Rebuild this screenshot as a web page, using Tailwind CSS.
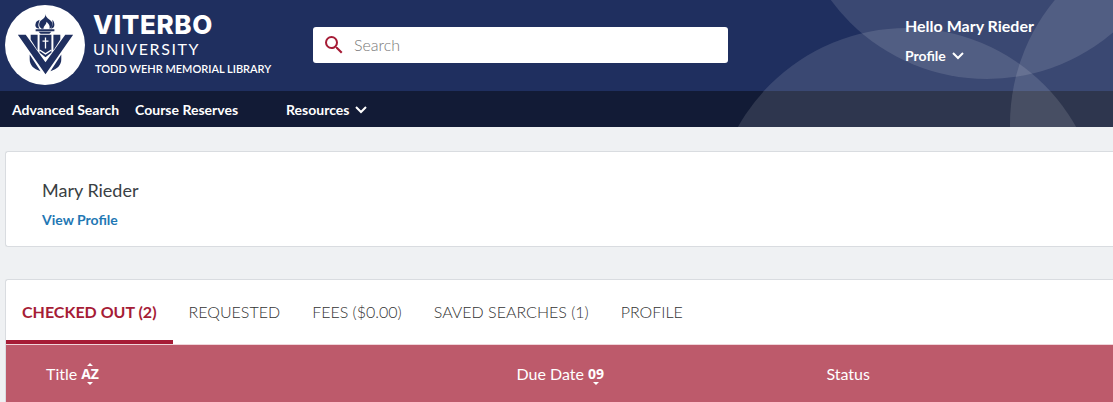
<!DOCTYPE html>
<html lang="en">
<head>
    <meta charset="UTF-8">
    <meta name="viewport" content="width=device-width, initial-scale=1.0">
    <title>My Account - Todd Wehr Memorial Library</title>
    <script src="https://cdn.jsdelivr.net/npm/@tailwindcss/browser@4"></script>
</head>
<body class="bg-[#eff1f3] min-h-screen overflow-x-hidden font-[Lato,sans-serif]">
    <header class="relative overflow-hidden bg-[#1f2f5f] text-white">
        <!-- Nav strip shade sits under the circles -->
        <div class="absolute inset-x-0 bottom-0 h-9 bg-[#121b36]"></div>
        <svg class="absolute right-0 top-0" width="375" height="127" viewBox="738 0 375 127" fill="#fff" fill-opacity=".12" aria-hidden="true">
            <circle cx="987" cy="-115" r="194"/>
            <circle cx="907" cy="222" r="194"/>
            <circle cx="1204" cy="124" r="194"/>
        </svg>

        <div class="relative flex h-[91px] items-center pb-px">
            <a href="#" class="flex w-[313px] shrink-0 items-center gap-2 pl-[5px]">
                <svg class="shrink-0" width="80" height="80" viewBox="0 0 81 81" aria-hidden="true">
                    <circle cx="40.5" cy="40.5" r="40.5" fill="#fff"/>
                    <g fill="#1f2f5f">
                        <!-- flame -->
                        <path d="M41 9c0 5 7 6 7 10 0 3-1 4-3 5 1-3-1-5-3-7 0 3-3 4-3 7h-2c-3-2-3-5-1-8 2-2 5-3 5-7z"/>
                        <path d="M35 15c-1 4-2 6 0 9-3 0-5-2-4-5 0-2 2-3 4-4zM48 15c1 1 2 3 2 5 0 2-1 4-4 4 3-3 2-6 2-9z"/>
                        <path d="M31 24.500h19v2H31zM34 27h13l-2 2h-9z"/>
                        <!-- shield and slabs -->
                        <path d="M35 30h12v18l-6 5-6-5z"/>
                        <path d="M26 30h7v16l-7-11zM49 30h7v5l-7 11z"/>
                        <!-- V -->
                        <path d="M13 30h8l20 28 20-28h8L41 70z"/>
                        <path d="M25 50l11 17c-7-2-11-6-11-12zM57 50L46 67c7-2 11-6 11-12z"/>
                    </g>
                    <path d="M41 33v11M38 36.500h6M35 45.500l6 4 6-4" fill="none" stroke="#fff" stroke-width="1.300"/>
                </svg>
                <span class="flex flex-col">
                    <span class="font-[Inter,sans-serif] text-[26px] leading-7 font-extrabold tracking-wide">VITERBO</span>
                    <span class="text-[16px] leading-5 tracking-widest">UNIVERSITY</span>
                    <span class="pl-0.5 text-[11px] leading-5 font-semibold">TODD WEHR MEMORIAL LIBRARY</span>
                </span>
            </a>
            <label class="flex h-9 w-[415px] items-center gap-2 rounded-[3px] bg-white pl-[9px]">
                <svg class="shrink-0" width="24" height="24" viewBox="0 0 24 24" fill="#a61c36" aria-hidden="true">
                    <path d="M15.500 14h-.79l-.28-.27A6.471 6.471 0 0 0 16 9.500 6.500 6.500 0 1 0 9.500 16c1.610 0 3.090-.59 4.230-1.570l.27.28v.79l5 4.990L20.490 19l-4.990-5zm-6 0C7.010 14 5 11.990 5 9.500S7.010 5 9.500 5 14 7.010 14 9.500 11.990 14 9.500 14z"/>
                </svg>
                <input type="search" placeholder="Search" aria-label="Search" class="w-full bg-transparent text-[16px] font-light text-gray-700 outline-none placeholder:text-[#777]">
            </label>
            <div class="ml-auto flex w-[208px] shrink-0 flex-col items-start gap-1.5 pb-2 font-bold">
                <span class="text-[16px] leading-6">Hello Mary Rieder</span>
                <button type="button" class="flex items-center gap-1.5 text-[14px] leading-6">
                    Profile
                    <svg width="12" height="8" viewBox="0 0 12 8" fill="none" stroke="#fff" stroke-width="2" aria-hidden="true"><path d="M1 1l5 5 5-5"/></svg>
                </button>
            </div>
        </div>

        <nav class="relative flex h-9 items-center pt-px pl-3 text-[14px] font-bold">
            <a href="#" class="mr-4">Advanced Search</a>
            <a href="#" class="mr-12">Course Reserves</a>
            <button type="button" class="flex items-center gap-1.5">
                Resources
                <svg width="12" height="8" viewBox="0 0 12 8" fill="none" stroke="#fff" stroke-width="2" aria-hidden="true"><path d="M1 1l5 5 5-5"/></svg>
            </button>
        </nav>
    </header>

    <main class="flex flex-col gap-8 pt-6 pl-[5px]">
        <section class="rounded-l-[3px] border border-r-0 border-[#d9dce0] bg-white pt-6 pb-4 pl-9">
            <h1 class="text-[18px] leading-7 text-[#3a3f44]">Mary Rieder</h1>
            <a href="#" class="mt-1.5 block text-[14px] leading-5 font-bold text-[#1f78b4]">View Profile</a>
        </section>

        <section class="rounded-tl-[3px] border-t border-l border-[#d9dce0] bg-white">
            <div role="tablist" class="flex h-[65px] border-b border-[#f0d5da] text-[16px] font-light text-[#333]">
                <button type="button" role="tab" aria-selected="true" class="border-b-4 border-[#a61c36] px-4 pt-1 font-bold text-[#a61c36]">CHECKED OUT (2)</button>
                <button type="button" role="tab" class="px-4">REQUESTED</button>
                <button type="button" role="tab" class="px-4">FEES ($0.00)</button>
                <button type="button" role="tab" class="px-4">SAVED SEARCHES (1)</button>
                <button type="button" role="tab" class="px-4">PROFILE</button>
            </div>
            <table class="w-full table-fixed text-left text-[16px] text-white">
                <thead>
                    <tr class="h-[58px] bg-[#bd5a6b]">
                        <th class="w-[42.5%] pl-10 font-normal">
                            <button type="button" class="flex items-center gap-1">
                                Title
                                <span class="relative font-[Open_Sans,sans-serif] text-[14px] leading-5 font-bold">AZ
                                    <svg class="absolute inset-x-0 -top-px mx-auto" width="6" height="22" viewBox="0 0 6 22" fill="#fff" aria-hidden="true"><path d="M0 3l3-3 3 3zM0 19l3 3 3-3z"/></svg>
                                </span>
                            </button>
                        </th>
                        <th class="w-[28%] pl-10 font-normal">
                            <button type="button" class="flex items-center gap-1">
                                Due Date
                                <span class="relative font-[Open_Sans,sans-serif] text-[14px] leading-5 font-bold">09
                                    <svg class="absolute inset-x-0 -top-px mx-auto" width="6" height="22" viewBox="0 0 6 22" fill="#fff" aria-hidden="true"><path d="M0 19l3 3 3-3z"/></svg>
                                </span>
                            </button>
                        </th>
                        <th class="pl-10 font-normal">Status</th>
                    </tr>
                </thead>
            </table>
        </section>
    </main>
</body>
</html>
